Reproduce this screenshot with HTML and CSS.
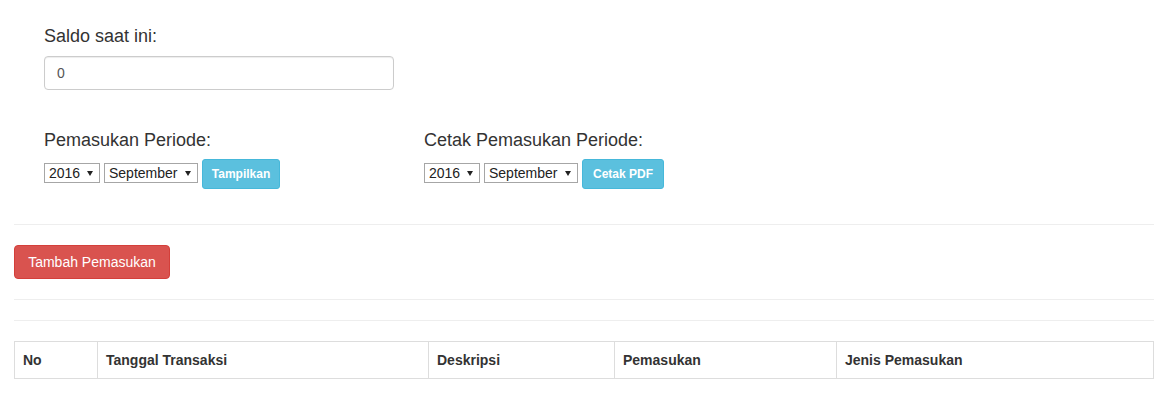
FILE: index.html
```html
<!DOCTYPE html>
<html lang="id">
<head>
<meta charset="utf-8">
<title>Pemasukan</title>
<link rel="stylesheet" href="styles.css">
</head>
<body>
<div class="page">
  <div class="form-area">
    <label class="lbl" for="saldo">Saldo saat ini:</label>
    <input class="saldo" id="saldo" type="text" value="0">

    <div class="periods">
      <div class="period">
        <label class="lbl">Pemasukan Periode:</label>
        <div class="controls">
          <span class="sel-wrap"><select class="sel sel-year"><option>2016</option></select></span>
          <span class="sel-wrap"><select class="sel sel-month"><option>September</option></select></span>
          <button class="btn-sm btn-info btn-show" type="button">Tampilkan</button>
        </div>
      </div>
      <div class="period">
        <label class="lbl">Cetak Pemasukan Periode:</label>
        <div class="controls">
          <span class="sel-wrap"><select class="sel sel-year"><option>2016</option></select></span>
          <span class="sel-wrap"><select class="sel sel-month"><option>September</option></select></span>
          <button class="btn-sm btn-info btn-pdf" type="button">Cetak PDF</button>
        </div>
      </div>
    </div>
  </div>

  <hr class="divider">
  <div class="actions">
    <button class="btn btn-danger btn-add" type="button">Tambah Pemasukan</button>
  </div>
  <hr class="divider">
  <hr class="divider">

  <table class="data">
    <thead>
      <tr>
        <th class="c-no">No</th>
        <th class="c-tgl">Tanggal Transaksi</th>
        <th class="c-desk">Deskripsi</th>
        <th class="c-pem">Pemasukan</th>
        <th class="c-jenis">Jenis Pemasukan</th>
      </tr>
    </thead>
  </table>
</div>
</body>
</html>
```
FILE: styles.css
```css
* { box-sizing: border-box; }

body {
  margin: 0;
  background: #fff;
  color: #333;
  font-family: "Liberation Sans", Arial, Helvetica, sans-serif;
  font-size: 14px;
  line-height: 20px;
}

.page {
  padding: 0 22px 0 14px;
}

.form-area {
  padding: 26px 30px 15px;
}

.lbl {
  display: block;
  font-size: 18px;
  line-height: 20px;
  font-weight: normal;
  margin-bottom: 10px;
  color: #333;
}

.saldo {
  display: block;
  width: 350px;
  height: 34px;
  padding: 6px 12px;
  margin: 0 0 40px;
  border: 1px solid #ccc;
  border-radius: 4px;
  box-shadow: inset 0 1px 1px rgba(0, 0, 0, 0.075);
  font-family: "Liberation Sans", Arial, sans-serif;
  font-size: 14px;
  color: #555;
  background: #fff;
}

.periods {
  display: flex;
}

.period {
  width: 380px;
}

.period .lbl {
  margin-bottom: 9px;
}

.controls {
  display: flex;
  align-items: flex-start;
  gap: 4px;
}

.sel-wrap {
  position: relative;
  display: block;
  margin-top: 4px;
}

.sel-wrap::after {
  content: "";
  position: absolute;
  right: 7px;
  top: 8px;
  width: 0;
  height: 0;
  border-left: 3px solid transparent;
  border-right: 3px solid transparent;
  border-top: 5px solid #222;
  pointer-events: none;
}

.sel {
  -webkit-appearance: none;
  appearance: none;
  display: block;
  height: 20px;
  padding: 0 0 0 4px;
  margin: 0;
  border: 1px solid #a6a6a6;
  border-radius: 0;
  background: #fff;
  color: #222;
  font-family: "Liberation Sans", Arial, sans-serif;
  font-size: 14px;
  line-height: 18px;
}

.sel-year { width: 56px; }
.sel-month { width: 94px; }

.btn-sm {
  height: 30px;
  padding: 5px 0;
  border-radius: 3px;
  font-family: "Liberation Sans", Arial, sans-serif;
  font-size: 12px;
  font-weight: bold;
  line-height: 18px;
  text-align: center;
  cursor: pointer;
}

.btn-show { width: 78px; }
.btn-pdf { width: 82px; }

.btn-info {
  color: #fff;
  background: #5bc0de;
  border: 1px solid #46b8da;
}

.divider {
  border: 0;
  border-top: 1px solid #eee;
  margin: 20px 0;
  height: 0;
}

.actions {
  display: flex;
}

.btn {
  height: 34px;
  padding: 6px 0;
  border-radius: 4px;
  font-family: "Liberation Sans", Arial, sans-serif;
  font-size: 14px;
  line-height: 20px;
  text-align: center;
  cursor: pointer;
}

.btn-add { width: 156px; }

.btn-danger {
  color: #fff;
  background: #d9534f;
  border: 1px solid #d43f3a;
}

.data {
  width: 1140px;
  border-collapse: collapse;
  table-layout: fixed;
  border: 1px solid #ddd;
}

.data th {
  padding: 8px;
  border: 1px solid #ddd;
  text-align: left;
  font-weight: bold;
  font-size: 14px;
  line-height: 20px;
  color: #333;
  vertical-align: bottom;
}

.c-no { width: 83px; }
.c-tgl { width: 331px; }
.c-desk { width: 186px; }
.c-pem { width: 222px; }
```
